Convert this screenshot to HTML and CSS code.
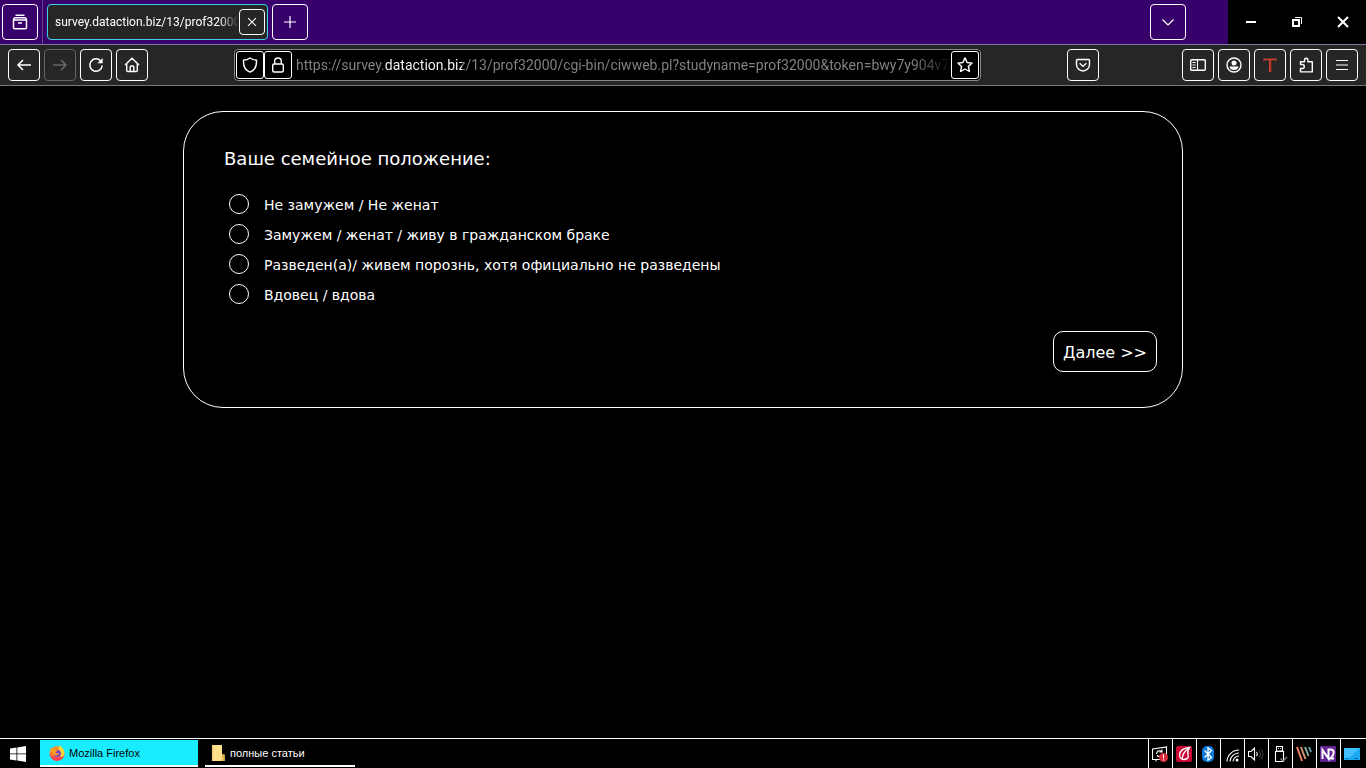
FILE: index.html
```
<!DOCTYPE html>
<html lang="ru">
<head>
<meta charset="utf-8">
<title>Mozilla Firefox</title>
<link rel="stylesheet" href="styles.css">
</head>
<body>
<header class="tabbar">
  <button class="btn btn-tab" aria-label="Firefox View"><svg class="icon" viewBox="0 0 16 16"><path stroke-width="1.5" d="M3.500 1.200h9M1.700 5.700q0-2 2-2h8.600q2 0 2 2M2 6h12q.5 0 .5.500v7q0 1.300-1.300 1.300H2.800q-1.300 0-1.300-1.300v-7q0-.5.5-.5zM6 9h4"/></svg></button>
  <div class="divider"></div>
  <div class="tab">
    <span class="tab-title">survey.dataction.biz/13/prof32000/</span>
    <button class="btn btn-close" aria-label="Закрыть вкладку"><svg class="icon" viewBox="0 0 16 16"><path d="M3.500 3.500l9 9M12.500 3.500l-9 9"/></svg></button>
  </div>
  <button class="btn btn-tab" aria-label="Новая вкладка"><svg class="icon" viewBox="0 0 16 16"><path d="M8 2v12M2 8h12"/></svg></button>
  <button class="btn btn-tab btn-list" aria-label="Список вкладок"><svg class="icon" viewBox="0 0 16 16"><path d="M2.500 5.500L8 11l5.500-5.500"/></svg></button>
  <div class="window-controls">
    <button aria-label="Свернуть"><svg class="icon" viewBox="0 0 16 16"><path stroke-width="2" d="M3 8h10"/></svg></button>
    <button aria-label="Восстановить"><svg class="icon" viewBox="0 0 16 16"><path stroke-width="2" d="M4 6h6v6H4z"/><path stroke-width="1" d="M6 3.500h6.500V10"/></svg></button>
    <button aria-label="Закрыть"><svg class="icon" viewBox="0 0 16 16"><path stroke-width="2" d="M3 3l10 10M13 3L3 13"/></svg></button>
  </div>
</header>
<nav class="navbar">
  <div class="group">
    <button class="btn" aria-label="Назад"><svg class="icon" viewBox="0 0 16 16"><path stroke-width="1.500" d="M15 8H2M7 3L2 8l5 5"/></svg></button>
    <button class="btn" disabled aria-label="Вперёд"><svg class="icon" viewBox="0 0 16 16"><path stroke-width="1.500" d="M1 8h13M9 3l5 5-5 5"/></svg></button>
    <button class="btn" aria-label="Обновить"><svg class="icon" viewBox="0 0 16 16"><path stroke-width="1.500" d="M12.700 4A6.200 6.200 0 1 0 14.200 8.500"/><path class="fill" d="M14.700 1v5.300H9.400z"/></svg></button>
    <button class="btn" aria-label="Домой"><svg class="icon" viewBox="0 0 16 16"><path stroke-width="1.400" d="M1 8l7-6.700L15 8M2.700 7v6.500q0 1 1 1h8.600q1 0 1-1V7M6.200 14.500V10q0-1 1-1h1.600q1 0 1 1v4.500"/></svg></button>
  </div>
  <div class="urlbar">
    <button class="btn btn-url" aria-label="Защита"><svg class="icon" viewBox="0 0 16 16"><path stroke-width="1.400" d="M8 1q3 2 6.500 2.200C14.800 9 12.500 13.500 8 15.200 3.500 13.500 1.200 9 1.500 3.200 5 3 8 1 8 1z"/></svg></button>
    <button class="btn btn-url" aria-label="Сведения о сайте"><svg class="icon" viewBox="0 0 16 16"><rect stroke-width="1.400" x="2.700" y="7" width="10.600" height="8" rx="1.500"/><path stroke-width="1.400" d="M4.700 7V4.300a3.300 3.300 0 0 1 6.600 0V7"/></svg></button>
    <input class="address" type="text" aria-label="Адрес" value="https://survey.dataction.biz/13/prof32000/cgi-bin/ciwweb.pl?studyname=prof32000&amp;token=bwy7y904v7n">
    <button class="btn btn-url" aria-label="Добавить закладку"><svg class="icon" viewBox="0 0 16 16"><path stroke-width="1.400" stroke-linejoin="round" d="M8 .9l2.100 4.600 5 .6-3.700 3.400 1 5L8 12l-4.400 2.500 1-5L.9 6.100l5-.6z"/></svg></button>
  </div>
  <button class="btn btn-pocket" aria-label="Pocket"><svg class="icon" viewBox="0 0 16 16"><path stroke-width="1.400" d="M2.500 2.500h11q1 0 1 1V7.500a6.500 6.500 0 0 1-13 0v-4q0-1 1-1zM4.700 6.300L8 9.400l3.300-3.100"/></svg></button>
  <div class="group">
    <button class="btn" aria-label="Боковая панель"><svg class="icon" viewBox="0 0 16 16"><rect stroke-width="1.400" x=".7" y="2.700" width="14.600" height="10.600" rx="1"/><path d="M7.500 3v10M2.500 5.500h3M2.500 8h3M2.500 10.500h3"/></svg></button>
    <button class="btn" aria-label="Аккаунт"><svg class="icon" viewBox="0 0 16 16"><circle stroke-width="1.400" cx="8" cy="8" r="7"/><circle class="fill" cx="8" cy="6" r="2.500"/><path class="fill" d="M3.500 9.500h9q-.8 3.500-4.500 3.500t-4.500-3.500z"/></svg></button>
    <button class="btn" aria-label="Расширение"><svg class="icon" viewBox="0 0 16 16"><path fill="#c9402e" stroke="none" d="M1.500 1q1 .8 3 .6h7q2 .2 3-.6v3.500q-.8-1.300-2.500-1.300H9.300V14l.8 1H6.300l.7-1V3.200H4q-1.700 0-2.500 1.300z"/><path stroke="#75211a" stroke-width=".8" d="M9 3.500V15"/></svg></button>
    <button class="btn" aria-label="Расширения"><svg class="icon" viewBox="0 0 16 16"><path stroke-width="1.400" stroke-linejoin="round" d="M2.500 7.500V4.700h4V3a1.700 1.700 0 0 1 3.400 0v1.700h4.400v10.200H2.500v-3.400h1.800a2 2 0 0 0 0-4z"/></svg></button>
    <button class="btn" aria-label="Меню"><svg class="icon" viewBox="0 0 16 16"><path stroke-width="1.200" d="M2 3.500h12M2 8h12M2 12.500h12"/></svg></button>
  </div>
</nav>
<main class="page">
  <form class="card">
    <fieldset class="question">
      <legend class="question-title">Ваше семейное положение:</legend>
      <label class="option"><input type="radio" name="family"><span>Не замужем / Не женат</span></label>
      <label class="option"><input type="radio" name="family"><span>Замужем / женат / живу в гражданском браке</span></label>
      <label class="option"><input type="radio" name="family"><span>Разведен(а)/ живем порознь, хотя официально не разведены</span></label>
      <label class="option"><input type="radio" name="family"><span>Вдовец / вдова</span></label>
    </fieldset>
    <button class="next" type="button">Далее &gt;&gt;</button>
  </form>
</main>
<footer class="taskbar">
  <button class="start" aria-label="Пуск"><svg class="icon" viewBox="0 0 16 16"><path class="fill" d="M0 2.500l6.500-1v6H0zM7.300 1.400L16 0v7.500H7.300zM0 8.300h6.500v6.200l-6.500-1zM7.300 8.300H16V16l-8.700-1.400z"/></svg></button>
  <button class="task task-active"><svg class="icon" viewBox="0 0 16 16"><circle cx="8" cy="8.500" r="7.300" fill="#ff8a25" stroke="none"/><path fill="#fb3f50" stroke="none" d="M.7 7Q.5 13 5 15.200t9-2.200q2-2.400 1.300-5-3 5-7.300 4.500Q2 12 .7 7z"/><path fill="#ffd43b" stroke="none" d="M10.500.5Q16.500 4 15 10.500 12.500 13 11 11q2-4-1.500-6Q9 2.500 10.500.5z"/><circle cx="8.300" cy="8.600" r="3.500" fill="#7541c7" stroke="none"/><path fill="#ff9d20" stroke="none" d="M1.500 5L2.300 2.500 5 4.700q2-.4 3.500 1.300L6.500 7.500q1.500 1.700 4 .6Q9 11.500 5.500 10z"/></svg>Mozilla Firefox</button>
  <button class="task"><svg class="icon" viewBox="0 0 16 16"><path fill="#ffe08a" stroke="none" d="M2 0h10v9.500h2.500V16H2z"/><path fill="#e3b94e" stroke="none" d="M12 9.500h2.700V16H10.500l1.500-1.500z"/><path stroke="#f2ca66" d="M2.500 0v16"/></svg>полные статьи</button>
  <div class="tray">
    <button aria-label="Обновления"><svg class="icon" viewBox="0 0 16 16"><path d="M.5 3L14.500 1v12.500H.5zM4 13.500v2M4.500 8Q5 4 9 5l1 1M10 3.500V6H7.500M5 9.500q2 2 4.500 0"/><circle cx="11.500" cy="11.500" r="4.500" fill="#db2b38" stroke="none"/><path d="M11.500 8.500v3.700M11.500 13.200v1.300"/></svg></button>
    <button aria-label="Антивирус"><svg class="icon" viewBox="0 0 16 16"><rect width="16" height="16" rx="2" fill="#c80734" stroke="none"/><path stroke-width="1.300" d="M13.500 1.500Q4 2.500 3.500 9q.3 4.500 4.500 4.500 5.500-.5 4-5Q11 5 13.500 1.500zM6 13Q7 6 12 3"/></svg></button>
    <button aria-label="Bluetooth"><svg class="icon" viewBox="0 0 16 16"><rect x="2" width="12" height="16" rx="5" fill="#0879dc" stroke="none"/><path stroke-width="1.300" d="M4.500 4.500l7 7L8 14.200V1.800l3.500 2.700-7 7"/></svg></button>
    <button aria-label="Сеть"><svg class="icon" viewBox="0 0 16 16"><path d="M3 15.500A12 12 0 0 1 15 4M6 15.500A9 9 0 0 1 15 7M9 15.500a6 6 0 0 1 6-5.500"/><circle class="fill" cx="13" cy="14" r="1.500"/></svg></button>
    <button aria-label="Громкость"><svg class="icon" viewBox="0 0 16 16"><path d="M.5 5.500H3L6.500 2v12L3 10.500H.5zM8.500 6q1.500 2 0 4"/><path opacity=".25" d="M11 4.500q3 3.500 0 7M13 3q4 5 0 10"/></svg></button>
    <button aria-label="USB"><svg class="icon" viewBox="0 0 16 16"><path d="M4.500.5h6V5h-6zM3.500 5.500h8v10h-8zM6 2.500h.8M8.300 2.500h.8"/><path stroke="#888" stroke-width="1.300" d="M8.500 12.500L11 15l4-4"/></svg></button>
    <button aria-label="Монитор"><svg class="icon" viewBox="0 0 16 16"><path stroke="#f18262" stroke-width="2" d="M1 1l5 14"/><path stroke="#d69269" stroke-width="2" d="M5 1l4.500 12"/><path stroke="#87ae9b" stroke-width="2" d="M9 1l3.500 9"/><path stroke="#529da8" stroke-width="2" d="M13 1l2 5"/></svg></button>
    <button aria-label="NVDA"><svg class="icon" viewBox="0 0 16 16"><rect width="16" height="16" rx="1" fill="#612391" stroke="none"/><path stroke-width="2" d="M2.500 13V4l6 8.500V3.500h2.200q3 0 3 3t-3.200 6H14"/></svg></button>
    <button aria-label="Рабочий стол"><svg class="icon" viewBox="0 0 16 16"><rect y="2" width="16" height="12" fill="#1ba8f2" stroke="none"/><path fill="#41c0ff" stroke="none" d="M0 2h16L5 12H0z"/><path stroke="#04568d" d="M2 12.500h2M11 12.500h3"/></svg></button>
  </div>
</footer>
</body>
</html>
```
FILE: styles.css
```
* { box-sizing: border-box; }
html, body { height: 100%; margin: 0; }
body {
  display: flex;
  flex-direction: column;
  overflow: hidden;
  background: #000;
  color: #fff;
  font-family: "DejaVu Sans", sans-serif;
}
button, input { font: inherit; color: inherit; }
button {
  display: flex;
  align-items: center;
  justify-content: center;
  flex: none;
  margin: 0;
  padding: 0;
  border: 0;
  background: none;
}
.icon {
  display: block;
  flex: none;
  width: 16px;
  height: 16px;
  fill: none;
  stroke: currentColor;
  stroke-width: 1.1;
}
.fill { fill: currentColor; stroke: none; }

.btn {
  width: 32px;
  height: 32px;
  border: 1px solid #fff;
  border-radius: 4px;
}
.btn:disabled { color: #666; border-color: #666; }
.btn-tab { width: 36px; height: 36px; }
.btn-close { width: 26px; height: 26px; }
.btn-url { width: 28px; height: 28px; border-radius: 3px; }

.tabbar {
  display: flex;
  flex: none;
  align-items: center;
  height: 45px;
  padding-left: 2px;
  border-bottom: 1px solid #82769a;
  background: #38006b;
}
.tabbar .icon { stroke-width: 1.2; }
.btn-close .icon { width: 14px; height: 14px; }
.divider {
  align-self: stretch;
  width: 1px;
  margin: 0 4px;
  background: #65458d;
}
.tab {
  display: flex;
  align-items: center;
  width: 221px;
  height: 36px;
  margin-right: 4px;
  padding: 0 2px 0 7px;
  border: 1px solid #3fd0e8;
  border-radius: 4px;
  background: #262626;
}
.tab-title {
  flex: 1;
  min-width: 0;
  white-space: nowrap;
  font: 12px/20px "Roboto", sans-serif;
  mask-image: linear-gradient(to left, transparent, #000 20px);
}
.btn-list { margin-left: auto; margin-right: 42px; }
.window-controls { display: flex; align-self: stretch; background: #000; }
.window-controls button { width: 46px; }

.navbar {
  display: flex;
  flex: none;
  align-items: center;
  height: 41px;
  padding: 0 8px;
  border-bottom: 1px solid #777;
  background: #262626;
}
.group { display: flex; gap: 4px; }
.btn-pocket { margin-right: 83px; }
.urlbar {
  display: flex;
  flex: 0 1 747px;
  align-items: center;
  height: 32px;
  margin: 0 auto;
  padding: 0 1px;
  border: 1px solid #888;
  border-radius: 4px;
  background: #000;
}
.address {
  flex: 1;
  min-width: 0;
  height: 28px;
  padding: 0 0 0 4px;
  border: 0;
  outline: 0;
  font: 14px/20px "Roboto", sans-serif;
  color: #929292;
  background: linear-gradient(90deg, #858585 92px, #fff 92px, #fff 170px, #858585 170px, #858585 620px, #111 656px);
  background-clip: text;
  -webkit-text-fill-color: transparent;
}

.page { flex: 1; min-height: 0; padding: 25px 16px; }
.card {
  display: flex;
  flex-direction: column;
  max-width: 1000px;
  margin: 0 auto;
  padding: 35px 25px 35px 40px;
  border: 1px solid #fff;
  border-radius: 40px;
}
.question { margin: 0; padding: 0; border: 0; }
.question-title { padding: 0; margin-bottom: 19px; font-size: 18px; line-height: 23px; }
.option {
  display: flex;
  align-items: center;
  gap: 15px;
  height: 30px;
  padding-left: 5px;
  font-size: 14px;
}
.option span { padding-top: 2px; }
.option input {
  appearance: none;
  flex: none;
  width: 20px;
  height: 20px;
  margin: 0;
  border: 1px solid #fff;
  border-radius: 50%;
}
.option input:checked { box-shadow: inset 0 0 0 4px #000; background: #fff; }
.next {
  align-self: flex-end;
  height: 41px;
  margin-top: 22px;
  padding: 1px 9px 0;
  border: 1px solid #fff;
  border-radius: 10px;
  font-size: 16px;
}

.taskbar {
  display: flex;
  flex: none;
  height: 30px;
  padding-top: 1px;
  border-top: 1px solid #fff;
}
.start { width: 36px; margin-right: 4px; }
.task {
  justify-content: flex-start;
  gap: 4px;
  width: 150px;
  height: 27px;
  padding-left: 5px;
  border-bottom: 2px solid #fff;
  font: 11px/16px "Liberation Sans", sans-serif;
}
.task-active {
  width: 158px;
  margin-right: 7px;
  padding-left: 9px;
  background: #19ecff;
  background-clip: padding-box;
  color: #000;
}
.tray { display: flex; margin: -1px 2px 0 auto; }
.tray button { width: 24px; padding-right: 2px; border-left: 1px solid #fff; }
```
